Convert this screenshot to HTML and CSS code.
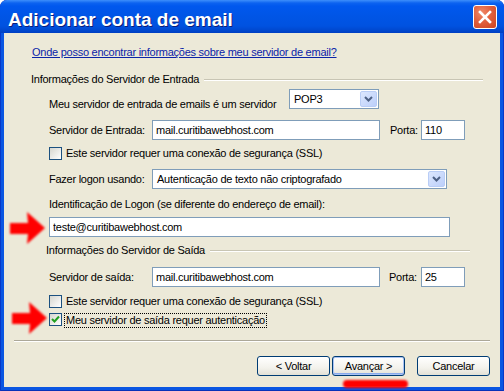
FILE: index.html
```html
<!DOCTYPE html>
<html lang="pt-BR">
<head>
  <meta charset="UTF-8">
  <meta name="viewport" content="width=device-width, initial-scale=1.0">
  <title>Adicionar conta de email</title>
  <link rel="stylesheet" href="styles.css">
</head>
<body>
  <div class="window">
    <div class="titlebar">
      <span class="title">Adicionar conta de email</span>
      <span class="close-btn">
        <svg width="14" height="14" viewBox="0 0 14 14">
          <path d="M2 2 L12 12 M12 2 L2 12" stroke="#fff" stroke-width="2.6" stroke-linecap="square"/>
        </svg>
      </span>
    </div>

    <div class="client">
      <a class="help-link" href="#">Onde posso encontrar informações sobre meu servidor de email?</a>

      <div class="group-title group-in">
        <span>Informações do Servidor de Entrada</span>
        <i class="rule"></i>
      </div>

      <div class="row row-type">
        <label class="lbl-type">Meu servidor de entrada de emails é um servidor</label>
        <div class="combo combo-type">
          <span class="combo-text">POP3</span>
          <span class="drop"><svg width="9" height="6" viewBox="0 0 9 6"><path d="M1 1 L4.5 4.5 L8 1" stroke="#4d6185" stroke-width="2" fill="none"/></svg></span>
        </div>
      </div>

      <div class="row row-field">
        <label class="lbl-field">Servidor de Entrada:</label>
        <input class="field field-server" type="text" value="mail.curitibawebhost.com">
        <label class="lbl-port">Porta:</label>
        <input class="field field-port" type="text" value="110">
      </div>

      <div class="row row-check row-ssl-in">
        <span class="check"></span>
        <span class="check-text">Este servidor requer uma conexão de segurança (SSL)</span>
      </div>

      <div class="row row-field row-logon">
        <label class="lbl-field">Fazer logon usando:</label>
        <div class="combo combo-auth">
          <span class="combo-text">Autenticação de texto não criptografado</span>
          <span class="drop"><svg width="9" height="6" viewBox="0 0 9 6"><path d="M1 1 L4.5 4.5 L8 1" stroke="#4d6185" stroke-width="2" fill="none"/></svg></span>
        </div>
      </div>

      <div class="row row-text">Identificação de Logon (se diferente do endereço de email):</div>

      <div class="row row-email">
        <input class="field field-email" type="text" value="teste@curitibawebhost.com">
      </div>

      <div class="group-title group-out">
        <span>Informações do Servidor de Saída</span>
        <i class="rule"></i>
      </div>

      <div class="row row-field row-smtp">
        <label class="lbl-field">Servidor de saída:</label>
        <input class="field field-server" type="text" value="mail.curitibawebhost.com">
        <label class="lbl-port lbl-port-out">Porta:</label>
        <input class="field field-port" type="text" value="25">
      </div>

      <div class="row row-check row-ssl-out">
        <span class="check"></span>
        <span class="check-text">Este servidor requer uma conexão de segurança (SSL)</span>
      </div>

      <div class="row row-check row-auth">
        <span class="check checked">
          <svg width="9" height="9" viewBox="0 0 9 9"><path d="M1 4 L3.5 6.5 L8 1.5" stroke="#21a121" stroke-width="2" fill="none"/></svg>
        </span>
        <span class="check-text focused">Meu servidor de saída requer autenticação</span>
      </div>

      <div class="separator"></div>

      <div class="buttons">
        <button class="btn">&lt; Voltar</button>
        <button class="btn btn-default">Avançar &gt;</button>
        <button class="btn btn-cancel">Cancelar</button>
      </div>
    </div>

    <!-- red marks painted over the screenshot -->
    <svg class="arrow arrow-logon" width="44" height="38" viewBox="0 0 44 38">
      <path d="M4 14 L22 14 L21 3 L39 19 L21 35 L22 25 L4 25 Z" fill="#ff0000"/>
    </svg>
    <svg class="arrow arrow-auth" width="44" height="38" viewBox="0 0 44 38">
      <path d="M4 14 L22 14 L21 3 L39 19 L21 35 L22 25 L4 25 Z" fill="#ff0000"/>
    </svg>
    <span class="underline-mark"></span>
  </div>
</body>
</html>
```

FILE: styles.css
```css
* {
  box-sizing: border-box;
  margin: 0;
  padding: 0;
}

body {
  font-family: 'Liberation Sans', Arial, sans-serif;
  font-size: 11px;
  letter-spacing: -0.25px;
  color: #000;
  background: #fff;
}

.window {
  position: relative;
  width: 504px;
  height: 391px;
  background: #0a56e2;
  border-radius: 7px 7px 0 0;
  box-shadow: inset 1px 0 0 #0838c8, inset -1px 0 0 #0838c8, inset 0 -1px 0 #0831b8;
  overflow: hidden;
}

/* title bar */
.titlebar {
  height: 33px;
  display: flex;
  justify-content: space-between;
  padding: 0 7px 0 8px;
  background: linear-gradient(#3d8ffb 0, #0c63f0 3px, #0058ee 6px, #0055e6 16px, #0052e0 26px, #0046cc 31px, #003fc2 33px);
  border-radius: 7px 7px 0 0;
}

.title {
  padding-top: 10px;
  font-size: 19px;
  line-height: 19px;
  font-weight: bold;
  letter-spacing: 0;
  color: #fff;
  text-shadow: 1px 1px 0 #0a1d7a;
}

.close-btn {
  margin-top: 5px;
  width: 24px;
  height: 24px;
  display: flex;
  align-items: center;
  justify-content: center;
  border: 1px solid #fff;
  border-radius: 3px;
  background: radial-gradient(circle at 35% 30%, #f08a6a 0, #e2603e 45%, #cc4420 100%);
}

/* client area */
.client {
  margin: 0 4px;
  height: 354px;
  background: #ece9d8;
  display: flex;
  flex-direction: column;
}

.help-link {
  margin: 13px 0 0 28px;
  line-height: 13px;
  color: #0b24a8;
  text-decoration: underline;
  align-self: flex-start;
}

.group-title {
  display: flex;
  align-items: center;
  height: 13px;
  line-height: 13px;
}

.group-title .rule {
  flex: 1;
  margin-left: 5px;
  height: 2px;
  border-top: 1px solid #c8c5b4;
  border-bottom: 1px solid #fff;
}

.group-in {
  margin-top: 14px;
  padding: 0 17px 0 27px;
}

.group-out {
  margin-top: 7px;
  padding: 0 30px 0 42px;
}

.row {
  display: flex;
  align-items: center;
  padding-left: 45px;
  line-height: 13px;
}

.row-type {
  margin-top: 3px;
  height: 20px;
  align-items: flex-start;
}

.lbl-type {
  width: 240px;
  padding-top: 9px;
}

.row-field {
  margin-top: 11px;
  height: 20px;
}

.row-logon {
  margin-top: 9px;
}

.row-smtp {
  margin-top: 10px;
}

.lbl-field {
  width: 103px;
}

.lbl-port {
  margin-left: 10px;
  width: 31px;
}

.lbl-port-out {
  margin-left: 9px;
  width: 32px;
}

.field {
  height: 20px;
  border: 1px solid #7f9db9;
  background: #fff;
  font: inherit;
  letter-spacing: inherit;
  color: #000;
  padding: 0 3px;
  outline: none;
}

.field-server {
  width: 228px;
}

.field-port {
  width: 44px;
}

.field-email {
  width: 401px;
}

.combo {
  height: 20px;
  display: flex;
  align-items: center;
  border: 1px solid #7f9db9;
  background: #fff;
  padding: 1px;
}

.combo-type {
  width: 90px;
}

.combo-auth {
  width: 295px;
}

.combo-text {
  flex: 1;
  padding-left: 3px;
}

.drop {
  width: 17px;
  height: 16px;
  display: flex;
  align-items: center;
  justify-content: center;
  border: 1px solid #b9cdf6;
  border-radius: 2px;
  background: linear-gradient(135deg, #dce7fe, #bccffa);
}

.row-check {
  align-items: flex-start;
  height: 13px;
}

.row-ssl-in {
  margin-top: 7px;
}

.row-ssl-out {
  margin-top: 8px;
}

.row-auth {
  margin-top: 5px;
  height: 15px;
}

.check {
  width: 13px;
  height: 13px;
  display: flex;
  align-items: center;
  justify-content: center;
  border: 1px solid #1c5180;
  background: linear-gradient(135deg, #d6d6cf, #fff);
  margin-right: 4px;
}

.check-text.focused {
  margin-left: -2px;
  padding: 0 1px;
  border: 1px dotted #000;
}

.row-text {
  margin-top: 9px;
}

.row-email {
  margin-top: 6px;
  height: 20px;
}

.separator {
  margin: 12px 10px 0 10px;
  height: 2px;
  border-top: 1px solid #aca899;
  border-bottom: 1px solid #fff;
}

.buttons {
  margin-top: 14px;
  display: flex;
  justify-content: flex-end;
  gap: 2px;
  padding-right: 10px;
}

.btn {
  width: 73px;
  height: 20px;
  border: 1px solid #003c74;
  border-radius: 3px;
  background: linear-gradient(#fff, #f3f2ec 60%, #e3e1d6);
  font: inherit;
  letter-spacing: inherit;
  color: #000;
}

.btn-default {
  box-shadow: inset 0 0 0 1px #a9c2f3, inset 0 -1px 0 1px #88a9ec;
}

.btn-cancel {
  margin-left: 10px;
}

/* red annotations */
.arrow {
  position: absolute;
  filter: blur(1.2px);
}

.arrow-logon {
  left: 6px;
  top: 209px;
}

.arrow-auth {
  left: 8px;
  top: 299px;
}

.underline-mark {
  position: absolute;
  left: 343px;
  top: 380px;
  width: 65px;
  height: 8px;
  border-radius: 4px;
  background: #ff0000;
  filter: blur(1px);
}
```
